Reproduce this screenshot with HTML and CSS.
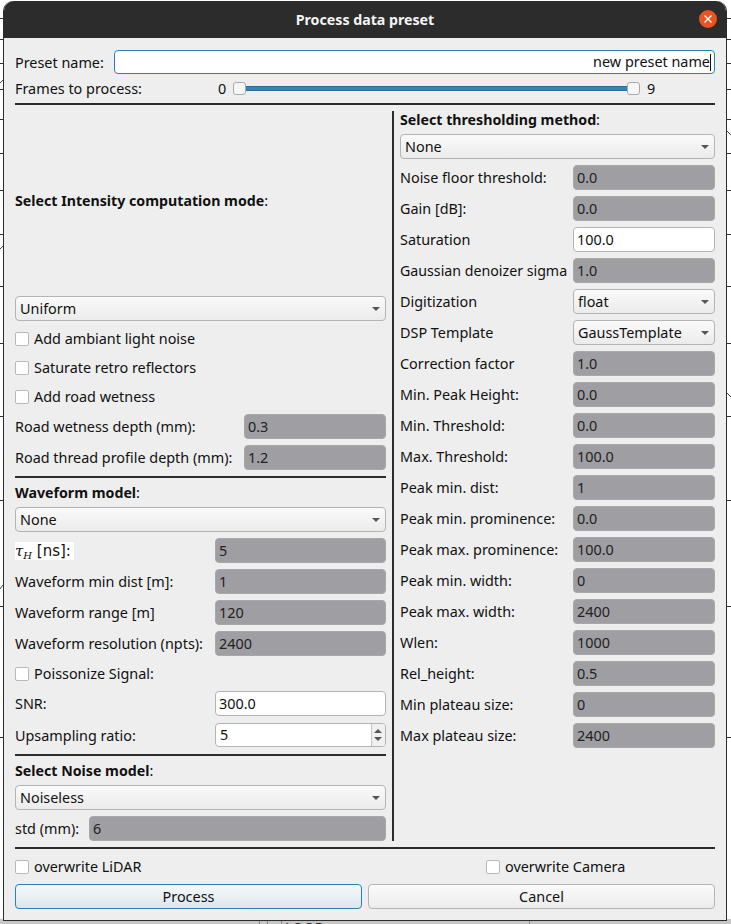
FILE: index.html
```html
<!DOCTYPE html>
<html>
<head>
  <meta charset="UTF-8">
  <title>Process data preset</title>
  <link rel="stylesheet" href="styles.css">
</head>
<body>
  <div class="desktop">
    <span class="bg-line" style="top: 18px"></span>
    <span class="bg-line" style="top: 39px"></span>
    <span class="bg-line" style="top: 63px"></span>
    <span class="bg-line" style="top: 89px"></span>
    <span class="bg-line" style="top: 119px"></span>
    <span class="bg-line" style="top: 153px"></span>
    <span class="bg-line" style="top: 190px"></span>
    <span class="bg-line" style="top: 234px"></span>
    <span class="bg-line" style="top: 286px"></span>
    <span class="bg-line" style="top: 343px"></span>
    <span class="bg-line" style="top: 416px"></span>
    <span class="bg-line" style="top: 500px"></span>
    <span class="bg-line" style="top: 606px"></span>
    <span class="bg-line" style="top: 737px"></span>
    <svg class="bg-marks" width="731" height="924" viewBox="0 0 731 924">
      <path d="M0 83l3-3M0 249l3-3M0 589l3-4M727 131l4 4M727 393l4 4" stroke="#444" fill="none"/>
    </svg>
    <div class="desktop-bottom">
      <span class="bg-tick" style="left: 259px"></span>
      <span class="bg-tick" style="left: 267px"></span>
      <span class="bg-tick" style="left: 281px"></span>
      <span class="bg-tick" style="left: 529px"></span>
      <span class="loop-text">LOOP</span>
    </div>
  </div>

  <div class="dialog">
    <div class="titlebar">
      <span class="title">Process data preset</span>
      <button class="close-btn">
        <svg width="18" height="18" viewBox="0 0 18 18"><circle cx="9" cy="9" r="9" fill="#e95420"/><path d="M5.5 5.5l7 7M12.5 5.5l-7 7" stroke="#fff" stroke-width="1.3"/></svg>
      </button>
    </div>

    <div class="content">
      <div class="row top-row">
        <label class="preset-label">Preset name:</label>
        <div class="field preset-input">new preset name<span class="caret"></span></div>
      </div>
      <div class="row frames-row">
        <label class="frames-label">Frames to process:</label>
        <span class="range-min">0</span>
        <div class="slider"><span class="handle"></span><span class="track"></span><span class="handle"></span></div>
        <span class="range-max">9</span>
      </div>
      <div class="hline"></div>

      <div class="columns">
        <div class="col-left">
          <div class="intensity-head"><b>Select Intensity computation mode</b>:</div>
          <div class="combo">Uniform<span class="arrow"></span></div>
          <div class="check-group">
            <div class="check"><span class="box"></span>Add ambiant light noise</div>
            <div class="check"><span class="box"></span>Saturate retro reflectors</div>
            <div class="check"><span class="box"></span>Add road wetness</div>
          </div>
          <div class="row form-row road"><label>Road wetness depth (mm):</label><div class="field off">0.3</div></div>
          <div class="row form-row road"><label>Road thread profile depth (mm):</label><div class="field off">1.2</div></div>
          <div class="hline"></div>

          <div class="head"><b>Waveform model</b>:</div>
          <div class="combo">None<span class="arrow"></span></div>
          <div class="row form-row wave"><label><span class="tau"><i>τ<sub>H</sub></i> [ns]:</span></label><div class="field off">5</div></div>
          <div class="row form-row wave"><label>Waveform min dist [m]:</label><div class="field off">1</div></div>
          <div class="row form-row wave"><label>Waveform range [m]</label><div class="field off">120</div></div>
          <div class="row form-row wave"><label>Waveform resolution (npts):</label><div class="field off">2400</div></div>
          <div class="check-group">
            <div class="check"><span class="box"></span>Poissonize Signal:</div>
          </div>
          <div class="row form-row wave"><label>SNR:</label><div class="field">300.0</div></div>
          <div class="row form-row wave spin-row"><label>Upsampling ratio:</label>
            <div class="field spin">5<span class="spin-btns"><span class="up"></span><span class="down"></span></span></div>
          </div>
          <div class="hline"></div>

          <div class="head"><b>Select Noise model</b>:</div>
          <div class="combo">Noiseless<span class="arrow"></span></div>
          <div class="row form-row std"><label>std (mm):</label><div class="field off">6</div></div>
        </div>

        <div class="vline"></div>

        <div class="col-right">
          <div class="head first"><b>Select thresholding method</b>:</div>
          <div class="combo">None<span class="arrow"></span></div>
          <div class="row form-row thr"><label>Noise floor threshold:</label><div class="field off">0.0</div></div>
          <div class="row form-row thr"><label>Gain [dB]:</label><div class="field off">0.0</div></div>
          <div class="row form-row thr"><label>Saturation</label><div class="field">100.0</div></div>
          <div class="row form-row thr"><label class="tight">Gaussian denoizer sigma</label><div class="field off">1.0</div></div>
          <div class="row form-row thr"><label>Digitization</label><div class="combo">float<span class="arrow"></span></div></div>
          <div class="row form-row thr"><label>DSP Template</label><div class="combo">GaussTemplate<span class="arrow"></span></div></div>
          <div class="row form-row thr"><label>Correction factor</label><div class="field off">1.0</div></div>
          <div class="row form-row thr"><label>Min. Peak Height:</label><div class="field off">0.0</div></div>
          <div class="row form-row thr"><label>Min. Threshold:</label><div class="field off">0.0</div></div>
          <div class="row form-row thr"><label>Max. Threshold:</label><div class="field off">100.0</div></div>
          <div class="row form-row thr"><label>Peak min. dist:</label><div class="field off">1</div></div>
          <div class="row form-row thr"><label>Peak min. prominence:</label><div class="field off">0.0</div></div>
          <div class="row form-row thr"><label>Peak max. prominence:</label><div class="field off">100.0</div></div>
          <div class="row form-row thr"><label>Peak min. width:</label><div class="field off">0</div></div>
          <div class="row form-row thr"><label>Peak max. width:</label><div class="field off">2400</div></div>
          <div class="row form-row thr"><label>Wlen:</label><div class="field off">1000</div></div>
          <div class="row form-row thr"><label>Rel_height:</label><div class="field off">0.5</div></div>
          <div class="row form-row thr"><label>Min plateau size:</label><div class="field off">0</div></div>
          <div class="row form-row thr"><label>Max plateau size:</label><div class="field off">2400</div></div>
        </div>
      </div>

      <div class="hline bottom-line"></div>
      <div class="row overwrite-row">
        <div class="check lidar"><span class="box"></span>overwrite LiDAR</div>
        <div class="check"><span class="box"></span>overwrite Camera</div>
      </div>
      <div class="row button-row">
        <button class="btn default">Process</button>
        <button class="btn">Cancel</button>
      </div>
    </div>
  </div>
</body>
</html>
```

FILE: styles.css
```css
* { box-sizing: border-box; margin: 0; padding: 0; }
body {
  background: #fff;
  width: 731px;
  height: 924px;
  overflow: hidden;
  font-family: "Noto Sans", "Open Sans", sans-serif;
  font-size: 14.4px;
  color: #111;
  padding: 1px 0 0 3px;
  position: relative;
}
b { font-size: 14.2px; }

/* what shows behind the dialog */
.desktop { position: absolute; top: 0; left: 0; width: 731px; height: 924px; }
.bg-line { position: absolute; left: 0; width: 731px; height: 1px; background: #333; }
.bg-marks { position: absolute; top: 0; left: 0; }
.desktop-bottom {
  position: absolute;
  left: 0;
  top: 919px;
  width: 731px;
  height: 5px;
  background: #c6c6c6;
  overflow: hidden;
}
.bg-tick { position: absolute; top: 0; width: 1px; height: 5px; background: #8a8a8a; }
.loop-text { position: absolute; left: 285px; top: 1px; line-height: 16px; color: #222; }

.dialog {
  position: relative;
  width: 724px;
  height: 920px;
  background: #eeeeee;
  border: 1px solid #2c2c2c;
  border-top: none;
  border-radius: 10px 10px 0 0;
  display: flex;
  flex-direction: column;
}
.titlebar {
  height: 37px;
  flex: none;
  background: #2c2c2c;
  border-radius: 10px 10px 0 0;
  position: relative;
  display: flex;
  align-items: center;
  justify-content: center;
}
.title { color: #f4f4f4; font-weight: 700; font-size: 14.2px; }
.close-btn {
  position: absolute;
  right: 9px;
  top: 9px;
  width: 18px;
  height: 18px;
  border: none;
  background: none;
  display: block;
}
.content { flex: 1; padding: 12px 11px 0 11px; display: flex; flex-direction: column; }

.row { display: flex; align-items: center; }
label { white-space: nowrap; }

.field {
  flex: 1;
  height: 25px;
  line-height: 23px;
  background: #fff;
  border: 1px solid #b4b4b4;
  border-radius: 4px;
  padding: 0 3px;
  min-width: 0;
  white-space: nowrap;
}
.field.off { background: #9f9ea2; border-color: #a8a7aa; color: #222; }

.top-row { height: 24px; }
.preset-label { width: 99px; }
.preset-input {
  height: 24px;
  line-height: 22px;
  border-color: #2c7fb3;
  text-align: right;
  padding-right: 3px;
}
.caret { display: inline-block; width: 1px; height: 17px; background: #111; vertical-align: -4px; }

.frames-row { height: 25px; margin-top: 2px; }
.frames-label { width: 203px; }
.range-min { width: 15px; }
.range-max { margin-left: 7px; }
.slider { width: 407px; display: flex; align-items: center; }
.track { flex: 1; height: 5px; background: #3584b9; border: 1px solid #2a6c98; margin: 0 -1px; }
.handle {
  width: 13px;
  height: 13px;
  background: #f6f6f6;
  border: 1px solid #aaa;
  border-radius: 3px;
  position: relative;
  z-index: 1;
}

.hline { height: 2px; background: #2c2c2c; flex: none; margin-top: 6px; }
.frames-row + .hline { margin-top: 2px; }
.spin-row + .hline { margin-top: 7px; }

.columns { display: flex; height: 730px; margin-top: 6px; flex: none; }
.col-left { width: 371px; display: flex; flex-direction: column; }
.vline { width: 2px; background: #2c2c2c; margin-left: 6px; flex: none; }
.col-right { width: 315px; margin-left: 6px; display: flex; flex-direction: column; }

.intensity-head { height: 185px; padding-bottom: 7px; display: flex; align-items: center; white-space: pre; }
.head { height: 25px; line-height: 25px; margin-top: 2px; margin-bottom: 2px; white-space: nowrap; }
.head.first { height: 17px; line-height: 17px; margin-top: 0; margin-bottom: 6px; }

.combo {
  flex: none;
  height: 25px;
  line-height: 23px;
  border: 1px solid #b4b4b4;
  border-radius: 4px;
  padding: 0 4px;
  background: linear-gradient(#fafafa, #ebebeb);
  position: relative;
}
.form-row .combo { flex: 1; }
.arrow {
  position: absolute;
  right: 5px;
  top: 10px;
  width: 0;
  height: 0;
  border-left: 4px solid transparent;
  border-right: 4px solid transparent;
  border-top: 4px solid #555;
}
.check-group { margin: 3px 0; }
.check { height: 29px; display: flex; align-items: center; white-space: nowrap; }
.box {
  width: 14px;
  height: 14px;
  background: #fff;
  border: 1px solid #b8b8b8;
  border-radius: 2px;
  margin-right: 5px;
  flex: none;
}

.form-row { margin-top: 6px; }
.form-row label { flex: none; }
.check-group + .form-row { margin-top: 0; }
.road label { width: 229px; }
.wave label { width: 200px; }
.std label { width: 74px; }
.thr label { width: 173px; }
.thr .tight { font-size: 14.2px; }

.tau {
  display: block;
  width: 59px;
  height: 18px;
  line-height: 18px;
  background: #fff;
  font-family: "DejaVu Sans", sans-serif;
  font-size: 15px;
  white-space: nowrap;
}
.tau i { font-family: "DejaVu Serif", serif; }
.tau sub { font-size: 10px; line-height: 0; vertical-align: -3px; }

.spin-row { margin-top: 7px; }
.spin { position: relative; height: 24px; line-height: 22px; padding-left: 4px; }
.spin-btns {
  position: absolute;
  right: 0;
  top: 0;
  bottom: 0;
  width: 14px;
  border-left: 1px solid #c4c4c4;
  background: #f0f0f0;
  border-radius: 0 3px 3px 0;
}
.up, .down { position: absolute; left: 2px; width: 0; height: 0; border-left: 4px solid transparent; border-right: 4px solid transparent; }
.up { top: 5px; border-bottom: 4px solid #555; }
.down { bottom: 5px; border-top: 4px solid #555; }

.overwrite-row { height: 29px; margin-top: 3px; }
.lidar { width: 471px; }
.button-row { gap: 6px; margin-top: 3px; }
.btn {
  flex: 1;
  height: 25px;
  border: 1px solid #b4b4b4;
  border-radius: 4px;
  background: linear-gradient(#fbfbfb, #ececec);
  font: inherit;
  color: #111;
}
.btn.default { border-color: #2c7fb3; background: linear-gradient(#f5f8fa, #dde6ec); }
```
